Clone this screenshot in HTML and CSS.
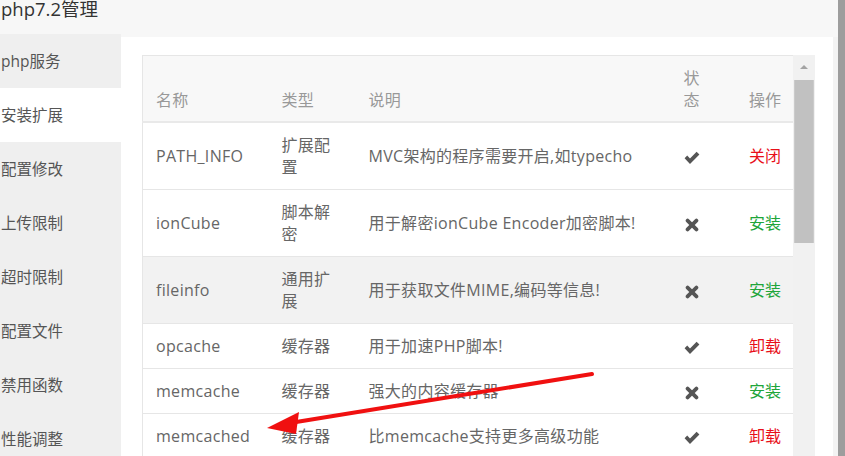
FILE: index.html
```html
<!DOCTYPE html>
<html lang="zh">
<head>
<meta charset="utf-8">
<link rel="stylesheet" href="styles.css">
</head>
<body>
<div class="frame">
  <div class="win">
    <div class="titlebar">php7.2管理</div>
    <div class="body">
      <ul class="side">
        <li>php服务</li>
        <li class="active">安装扩展</li>
        <li>配置修改</li>
        <li>上传限制</li>
        <li>超时限制</li>
        <li>配置文件</li>
        <li>禁用函数</li>
        <li>性能调整</li>
      </ul>
      <div class="main">
        <div class="tablebox">
          <table class="ext">
            <colgroup>
              <col class="c-name"><col class="c-type"><col class="c-desc"><col class="c-stat"><col class="c-op">
            </colgroup>
            <thead>
              <tr><th>名称</th><th class="type">类型</th><th>说明</th><th>状态</th><th class="op">操作</th></tr>
            </thead>
            <tbody>
              <tr><td>PATH_INFO</td><td class="type">扩展配置</td><td>MVC架构的程序需要开启,如typecho</td><td><span class="ico ok"></span></td><td class="op"><span class="red">关闭</span></td></tr>
              <tr><td>ionCube</td><td class="type">脚本解密</td><td>用于解密ionCube Encoder加密脚本!</td><td><span class="ico no"></span></td><td class="op"><span class="green">安装</span></td></tr>
              <tr class="hover"><td>fileinfo</td><td class="type">通用扩展</td><td>用于获取文件MIME,编码等信息!</td><td><span class="ico no"></span></td><td class="op"><span class="green">安装</span></td></tr>
              <tr><td>opcache</td><td class="type">缓存器</td><td>用于加速PHP脚本!</td><td><span class="ico ok"></span></td><td class="op"><span class="red">卸载</span></td></tr>
              <tr><td>memcache</td><td class="type">缓存器</td><td>强大的内容缓存器</td><td><span class="ico no"></span></td><td class="op"><span class="green">安装</span></td></tr>
              <tr><td>memcached</td><td class="type">缓存器</td><td>比memcache支持更多高级功能</td><td><span class="ico ok"></span></td><td class="op"><span class="red">卸载</span></td></tr>
            </tbody>
          </table>
        </div>
        <div class="scrollbar">
          <div class="sb-up"></div>
          <div class="sb-thumb"></div>
        </div>
      </div>
    </div>
  </div>
  <div class="edge"></div>
</div>
<svg class="arrow" width="845" height="456" viewBox="0 0 845 456">
  <line x1="592" y1="374" x2="290" y2="423" stroke="#f01010" stroke-width="4" stroke-linecap="round"/>
  <polygon points="267,428 299,412 296,434" fill="#f01010"/>
</svg>
</body>
</html>
```

FILE: styles.css
```css
* { box-sizing: border-box; }
html, body { margin: 0; padding: 0; }
body {
  width: 845px;
  height: 456px;
  overflow: hidden;
  background: #f7f7f7;
  font-family: "Open Sans", "Noto Sans CJK SC", sans-serif;
  color: #666;
}
.frame {
  display: flex;
  height: 456px;
  position: relative;
}
.win {
  flex: 1;
  display: flex;
  flex-direction: column;
  background: #f7f7f7;
}
.edge {
  width: 7px;
  background: #9d9d9d;
}
.titlebar {
  height: 34px;
  padding-left: 1px;
  font-size: 18.5px;
  line-height: 17px;
  color: #333;
}
.body {
  flex: 1;
  display: flex;
  min-height: 0;
}
.side {
  list-style: none;
  margin: 0;
  padding: 0;
  width: 121px;
  background: #efefef;
}
.side li {
  height: 54px;
  line-height: 54px;
  padding-left: 1px;
  font-size: 15.5px;
  color: #555;
}
.side li.active { background: #fff; }
.main {
  flex: 1;
  display: flex;
  align-items: flex-start;
  background: #fff;
  margin-top: 3px;
  padding: 18px 0 0 21px;
  border-right: 5px solid #f3f3f3;
}
.tablebox {
  width: 651px;
}
.ext {
  width: 651px;
  table-layout: fixed;
  border-collapse: collapse;
  border: 1px solid #e6e6e6;
  font-size: 16px;
  letter-spacing: 0.3px;
  line-height: 22px;
}
.c-name { width: 126px; }
.c-type { width: 87px; }
.c-desc { width: 315px; }
.c-stat { width: 50px; }
.c-op { width: 73px; }
.ext th {
  text-align: left;
  font-weight: normal;
  color: #999;
  vertical-align: bottom;
  padding: 11px 13px 10px;
  background: #f8f8f8;
  border-bottom: 2px solid #e9e9e9;
}
.ext td {
  padding: 11px 13px;
  vertical-align: middle;
  border-top: 1px solid #e6e6e6;
  background: #fff;
}
.ext tr.hover td { background: #f2f2f2; }
.ext .type { padding-right: 20px; }
.ext .op { text-align: right; padding-right: 12px; letter-spacing: 0; }
.red { color: #e8101a; }
.green { color: #20a53a; }
.ico {
  display: inline-block;
  width: 16px;
  height: 14px;
  vertical-align: middle;
  background-repeat: no-repeat;
  background-position: center;
}
.ico.ok {
  background-image: url("data:image/svg+xml;utf8,<svg xmlns='http://www.w3.org/2000/svg' width='16' height='14' viewBox='0 0 16 14'><path d='M0.6 7.2 L3.2 4.6 L6 7.4 L12.6 0.8 L15.4 3.6 L6 13 Z' fill='%23555'/></svg>");
}
.ico.no {
  background-image: url("data:image/svg+xml;utf8,<svg xmlns='http://www.w3.org/2000/svg' width='16' height='14' viewBox='0 0 16 14'><path d='M3.6 2.6 L12.4 11.4 M12.4 2.6 L3.6 11.4' stroke='%23555' stroke-width='3.8' stroke-linecap='round'/></svg>");
}
.scrollbar {
  width: 22px;
  height: 401px;
  background: #f1f1f1;
  display: flex;
  flex-direction: column;
  align-items: center;
}
.sb-up {
  width: 22px;
  height: 25px;
  position: relative;
}
.sb-up::after {
  content: "";
  position: absolute;
  left: 7px;
  top: 10px;
  border-left: 4px solid transparent;
  border-right: 4px solid transparent;
  border-bottom: 4px solid #a3a3a3;
}
.sb-thumb {
  width: 20px;
  height: 163px;
  background: #c1c1c1;
  border-left: 1px solid #cbcbcb;
  border-right: 1px solid #cbcbcb;
}
.arrow {
  position: absolute;
  left: 0;
  top: 0;
  pointer-events: none;
}
```
